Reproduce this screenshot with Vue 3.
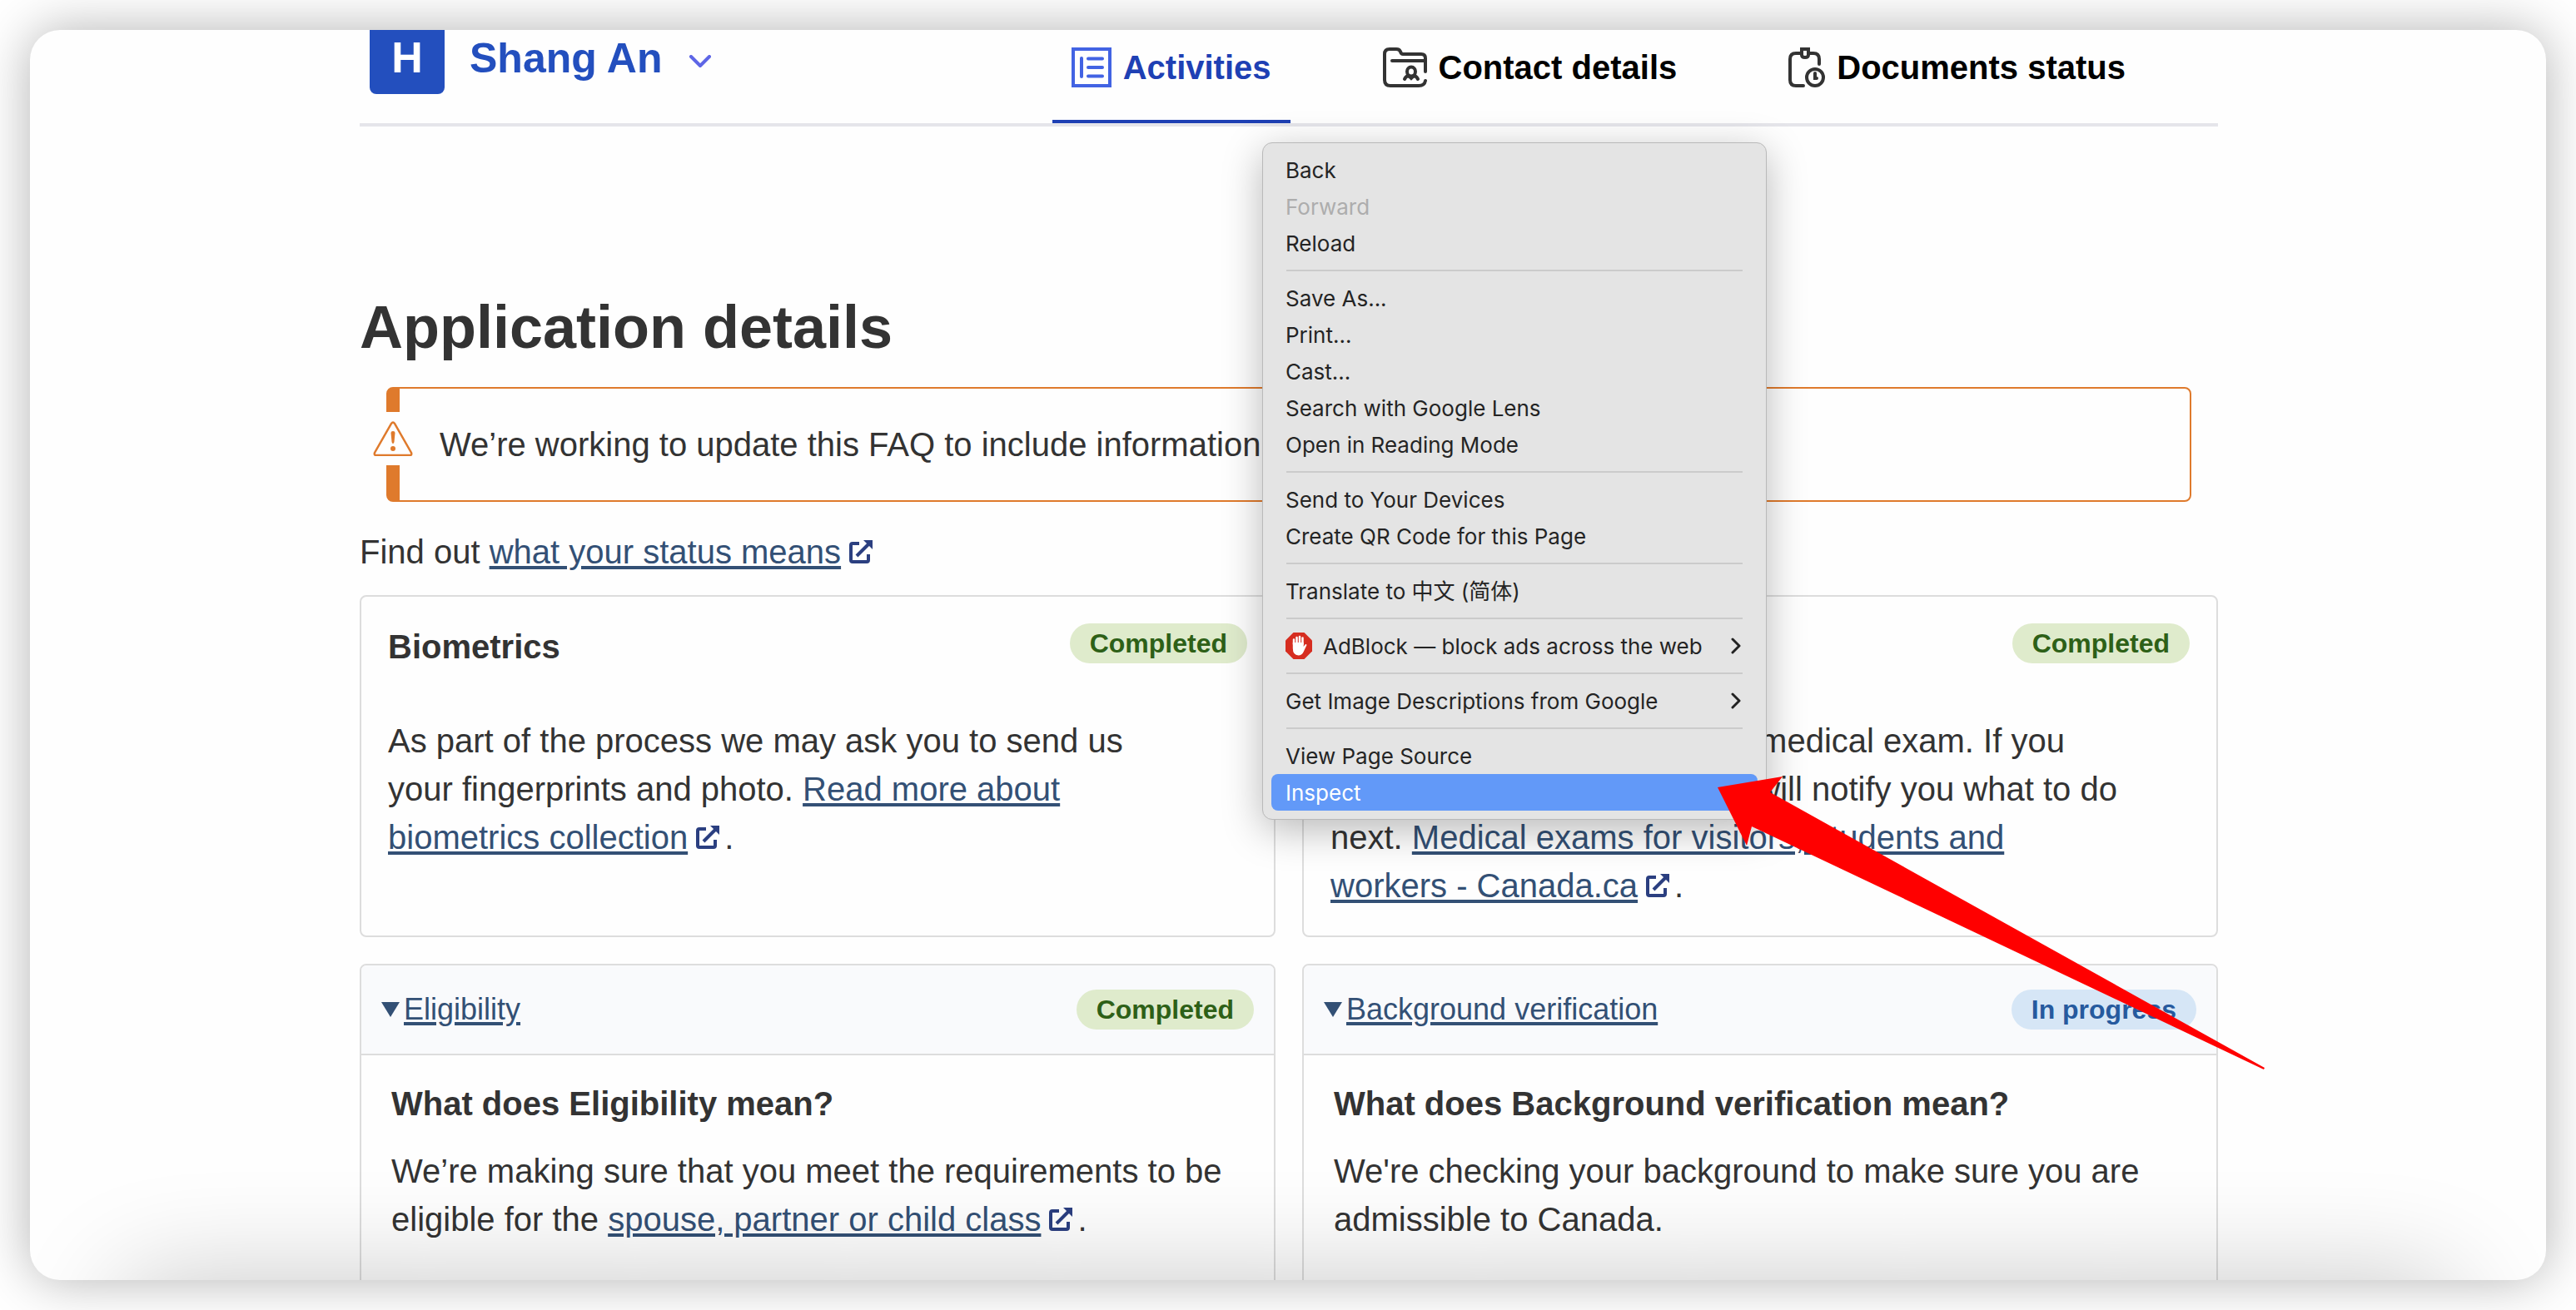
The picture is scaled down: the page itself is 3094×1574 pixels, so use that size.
<script setup>
import { h } from 'vue'

const ExternalIcon = () =>
  h('svg', { class: 'external', viewBox: '0 0 28 28', 'aria-hidden': 'true' }, [
    h('path', { d: 'M12 4H4Q2 4 2 6V24Q2 26 4 26H21Q23 26 23 24V17', fill: 'none', stroke: 'currentColor', 'stroke-width': 4 }),
    h('path', { d: 'M9 19L23 5', fill: 'none', stroke: 'currentColor', 'stroke-width': 4 }),
    h('path', { d: 'M17 0H28V11Z', fill: 'currentColor' }),
  ])

const menu = [
  [{ label: 'Back' }, { label: 'Forward', disabled: true }, { label: 'Reload' }],
  [
    { label: 'Save As...' },
    { label: 'Print...' },
    { label: 'Cast...' },
    { label: 'Search with Google Lens' },
    { label: 'Open in Reading Mode' },
  ],
  [{ label: 'Send to Your Devices' }, { label: 'Create QR Code for this Page' }],
  [{ label: 'Translate to 中文 (简体)' }],
  [{ label: 'AdBlock — block ads across the web', blocker: true, submenu: true }],
  [{ label: 'Get Image Descriptions from Google', submenu: true }],
  [{ label: 'View Page Source' }, { label: 'Inspect', active: true }],
]
</script>

<template>
  <div class="page">
    <div class="sheet">
      <div class="content">
        <header class="header">
          <div class="brand">
            <span class="logo">H</span>
            <button class="account" type="button">
              Shang An
              <svg class="caret" viewBox="0 0 28 16" aria-hidden="true">
                <path d="M3 2L14 13L25 2" fill="none" stroke="currentColor" stroke-width="4" stroke-linecap="round" stroke-linejoin="round" />
              </svg>
            </button>
          </div>
          <nav class="nav">
            <a class="tab current" href="#activities">
              <svg width="48" height="48" viewBox="0 0 48 48" fill="none" stroke="#4263e3" stroke-width="4" aria-hidden="true">
                <rect x="2" y="2" width="44" height="44" />
                <path d="M12 13V35M20 13.5H37M20 24H37M20 34.5H37" stroke-linecap="round" />
              </svg>
              Activities
            </a>
            <a class="tab" href="#contact">
              <svg width="53" height="48" viewBox="0 0 53 48" fill="none" stroke="#333" stroke-width="4" stroke-linecap="round" aria-hidden="true">
                <path d="M51 29V13Q51 8 46 8H24Q22 8 21 5Q20 2 16 2H8Q2 2 2 8V39Q2 46 9 46H43Q50 46 51 40" />
                <path d="M11 16H49" />
                <ellipse cx="34" cy="29" rx="5" ry="5.5" />
                <path d="M26 38Q28 34 31 34L34 37L37 34Q40 34 42 38" />
              </svg>
              Contact details
            </a>
            <a class="tab" href="#documents">
              <svg width="44" height="48" viewBox="0 0 44 48" fill="none" stroke="#333" stroke-width="4" stroke-linecap="round" aria-hidden="true">
                <path d="M15 7H9Q2 7 2 14V39Q2 46 9 46H18M25 7H30Q37 7 37 14V20" />
                <path d="M16 2H24V9Q24 12 20 12Q16 12 16 9Z" />
                <circle cx="32" cy="36" r="10" />
                <path d="M32 31V37H34" />
              </svg>
              Documents status
            </a>
          </nav>
        </header>

        <main>
          <h1>Application details</h1>
          <section class="alert">
            <span class="alert-icon">
              <svg width="48" height="42" viewBox="0 0 48 42" aria-hidden="true">
                <path d="M22 3Q24 0 26 3L46 38Q47 41 44 41H4Q1 41 2 38Z" fill="none" stroke="currentColor" stroke-width="2.5" />
                <path d="M21.500 14Q21.500 12 24 12Q26.500 12 26.500 14L25.500 25Q25 27 24 27Q23 27 22.500 25Z" fill="currentColor" />
                <circle cx="24" cy="33" r="3" fill="currentColor" />
              </svg>
            </span>
            <p>We’re working to update this FAQ to include information</p>
          </section>
          <p class="lead">Find out <a href="#status">what your status means</a><ExternalIcon /></p>

          <div class="cards">
            <section class="card simple">
              <div class="card-top">
                <h2>Biometrics</h2>
                <span class="badge done">Completed</span>
              </div>
              <p>
                As part of the process we may ask you to send us your fingerprints and photo.
                <a href="#biometrics">Read more about biometrics collection</a><ExternalIcon />.
              </p>
            </section>
            <section class="card simple">
              <div class="card-top">
                <h2>Medical exam</h2>
                <span class="badge done">Completed</span>
              </div>
              <p>
                We will tell you if you need a medical exam. If you need a medical exam, IRCC will notify you what to do next.
                <a href="#medical">Medical exams for visitors, students and workers - Canada.ca</a><ExternalIcon />.
              </p>
            </section>
            <section class="card">
              <div class="card-bar">
                <a class="toggle" href="#eligibility"><span class="triangle"></span>Eligibility</a>
                <span class="badge done">Completed</span>
              </div>
              <div class="card-body">
                <h2>What does Eligibility mean?</h2>
                <p>
                  We’re making sure that you meet the requirements to be eligible for the
                  <a href="#class">spouse, partner or child class</a><ExternalIcon />.
                </p>
              </div>
            </section>
            <section class="card">
              <div class="card-bar">
                <a class="toggle" href="#background"><span class="triangle"></span>Background verification</a>
                <span class="badge progress">In progress</span>
              </div>
              <div class="card-body">
                <h2>What does Background verification mean?</h2>
                <p>We're checking your background to make sure you are admissible to Canada.</p>
              </div>
            </section>
          </div>
        </main>

        <div class="menu" role="menu">
          <div v-for="(group, g) in menu" :key="g" class="group">
            <button
              v-for="item in group"
              :key="item.label"
              class="item"
              :class="{ active: item.active }"
              :disabled="item.disabled"
              type="button"
              role="menuitem"
            >
              <svg v-if="item.blocker" width="32" height="32" viewBox="0 0 32 32" aria-hidden="true">
                <path d="M9.5 0H22.5L32 9.5V22.5L22.5 32H9.5L0 22.5V9.5Z" fill="#d62d20" />
                <path d="M10 14V8.5M13.5 14V6M17 14V5M20.5 14V6.5" stroke="#fff" stroke-width="2.5" stroke-linecap="round" />
                <path d="M8.800 12H21.700V17L23.500 14.500Q25 13.500 25.500 15L21.500 23.500Q19.500 27.500 15.500 27.500Q8.800 27 8.800 19Z" fill="#fff" />
              </svg>
              <span class="label">{{ item.label }}</span>
              <svg v-if="item.submenu" width="12" height="20" viewBox="0 0 12 20" aria-hidden="true">
                <path d="M2 2L10 10L2 18" fill="none" stroke="#222" stroke-width="3" stroke-linecap="round" stroke-linejoin="round" />
              </svg>
            </button>
          </div>
        </div>

        <svg class="pointer" width="660" height="354" viewBox="0 0 660 354" aria-hidden="true">
          <path d="M0 13L78 0L63 19L657 350L656 352L41 60L35 83Z" fill="#f00" />
        </svg>
      </div>
      <div class="fade"></div>
    </div>
  </div>
</template>

<style>
body {
  margin: 0;
  background: #fff;
}
</style>

<style scoped>
.page {
  box-sizing: border-box;
  height: 100vh;
  padding: 36px;
  overflow: hidden;
  color: #333;
  font: 40px/58px "Liberation Sans", Arial, sans-serif;
}
h1, h2, p {
  margin: 0;
}
a {
  color: #335075;
  text-decoration-thickness: 4px;
  text-underline-offset: 3px;
}
.sheet {
  position: relative;
  box-sizing: border-box;
  height: 100%;
  padding-left: 2px;
  border-radius: 36px;
  background: #fefefe;
  box-shadow: 0 0 64px rgba(0, 0, 0, 0.3);
  overflow: hidden;
}
.content {
  position: relative;
  max-width: 2232px;
  margin: 0 auto;
}

/* Header */
.header {
  display: flex;
  justify-content: space-between;
  border-bottom: 4px solid #e5e5ea;
}
.brand {
  display: flex;
  align-items: flex-start;
  gap: 30px;
  padding-left: 12px;
}
.logo {
  width: 90px;
  padding-bottom: 11px;
  border-radius: 0 0 8px 8px;
  background: #234fbe;
  color: #fff;
  font-size: 52px;
  font-weight: bold;
  line-height: 66px;
  text-align: center;
}
.account {
  display: flex;
  align-items: center;
  gap: 32px;
  padding: 0;
  border: 0;
  background: none;
  color: #234fbe;
  font: bold 50px/68px "Liberation Sans", Arial, sans-serif;
}
.caret {
  width: 28px;
  height: 16px;
  margin-top: 8px;
  color: #5e66e6;
}
.nav {
  display: flex;
  gap: 88px;
  padding-right: 88px;
}
.tab {
  display: flex;
  align-items: center;
  gap: 14px;
  height: 90px;
  padding: 0 23px 18px;
  border-bottom: 4px solid transparent;
  color: #000;
  font-weight: bold;
  text-decoration: none;
}
.tab.current {
  border-color: #1e40b4;
  color: #1e40b4;
}

/* Title and alert */
h1 {
  margin-top: 199px;
  font-size: 72px;
  line-height: 84px;
}
.alert {
  position: relative;
  margin: 30px 32px 31px;
  padding: 38px 48px;
  border: 2px solid #df7a2c;
  border-left-width: 16px;
  border-radius: 8px;
}
.alert-icon {
  position: absolute;
  top: 28px;
  left: -32px;
  display: grid;
  place-items: center;
  width: 48px;
  height: 64px;
  background: #fefefe;
  color: #df7a2c;
}
.lead {
  margin-bottom: 23px;
}
.external {
  width: 28px;
  height: 28px;
  margin: 0 6px 0 10px;
  color: #2b3f80;
}

/* Cards */
.cards {
  display: grid;
  grid-template-columns: 1fr 1fr;
  gap: 32px;
}
.card {
  border: 2px solid #ddd;
  border-radius: 8px;
}
.simple {
  padding: 32px 32px 31px;
}
.card-top {
  display: flex;
  justify-content: space-between;
  align-items: flex-start;
  margin-bottom: 56px;
}
h2 {
  font-size: 40px;
  line-height: 56px;
}
.simple p {
  max-width: 952px;
}
.badge {
  padding: 0 24px;
  border-radius: 24px;
  font-size: 32px;
  font-weight: bold;
  line-height: 48px;
  white-space: nowrap;
}
.done {
  background: #dfebcc;
  color: #2d6017;
}
.progress {
  background: #d6e6f6;
  color: #265a9e;
}
.card-bar {
  display: flex;
  justify-content: space-between;
  align-items: center;
  height: 106px;
  padding: 0 24px;
  border-bottom: 2px solid #ddd;
  border-radius: 6px 6px 0 0;
  background: #f9fafc;
}
.toggle {
  display: flex;
  align-items: center;
  gap: 5px;
  font-size: 36px;
  line-height: 48px;
}
.triangle {
  width: 22px;
  height: 18px;
  background: #335075;
  clip-path: polygon(0 0, 100% 0, 50% 100%);
}
.card-body {
  padding: 30px 36px 64px;
}
.card-body h2 {
  margin-bottom: 24px;
}

/* Context menu */
.menu {
  position: absolute;
  top: 135px;
  left: 1084px;
  box-sizing: border-box;
  width: 606px;
  padding: 10px;
  border: 1px solid #b9b9b9;
  border-radius: 12px;
  background: #e4e4e4;
  box-shadow: 0 12px 48px rgba(0, 0, 0, 0.28);
}
.group + .group::before {
  content: "";
  display: block;
  height: 2px;
  margin: 10px 18px;
  background: #cbcbcb;
}
.item {
  display: flex;
  align-items: center;
  gap: 13px;
  width: 100%;
  height: 44px;
  padding: 0 20px 0 17px;
  border: 0;
  border-radius: 8px;
  background: none;
  color: #242424;
  font: 26px/42px Inter, "Noto Sans CJK SC", sans-serif;
  text-align: left;
}
.item:disabled {
  color: #adadad;
}
.item.active {
  background: #6299f8;
  color: #fff;
}
.label {
  flex: 1;
  padding-top: 2px;
  white-space: nowrap;
}
.pointer {
  position: absolute;
  top: 897px;
  left: 1631px;
}
.fade {
  position: absolute;
  right: 110px;
  bottom: -200px;
  left: 110px;
  height: 200px;
  border-radius: 40px;
  box-shadow: 0 0 130px rgba(0, 0, 0, 0.22);
}
</style>
